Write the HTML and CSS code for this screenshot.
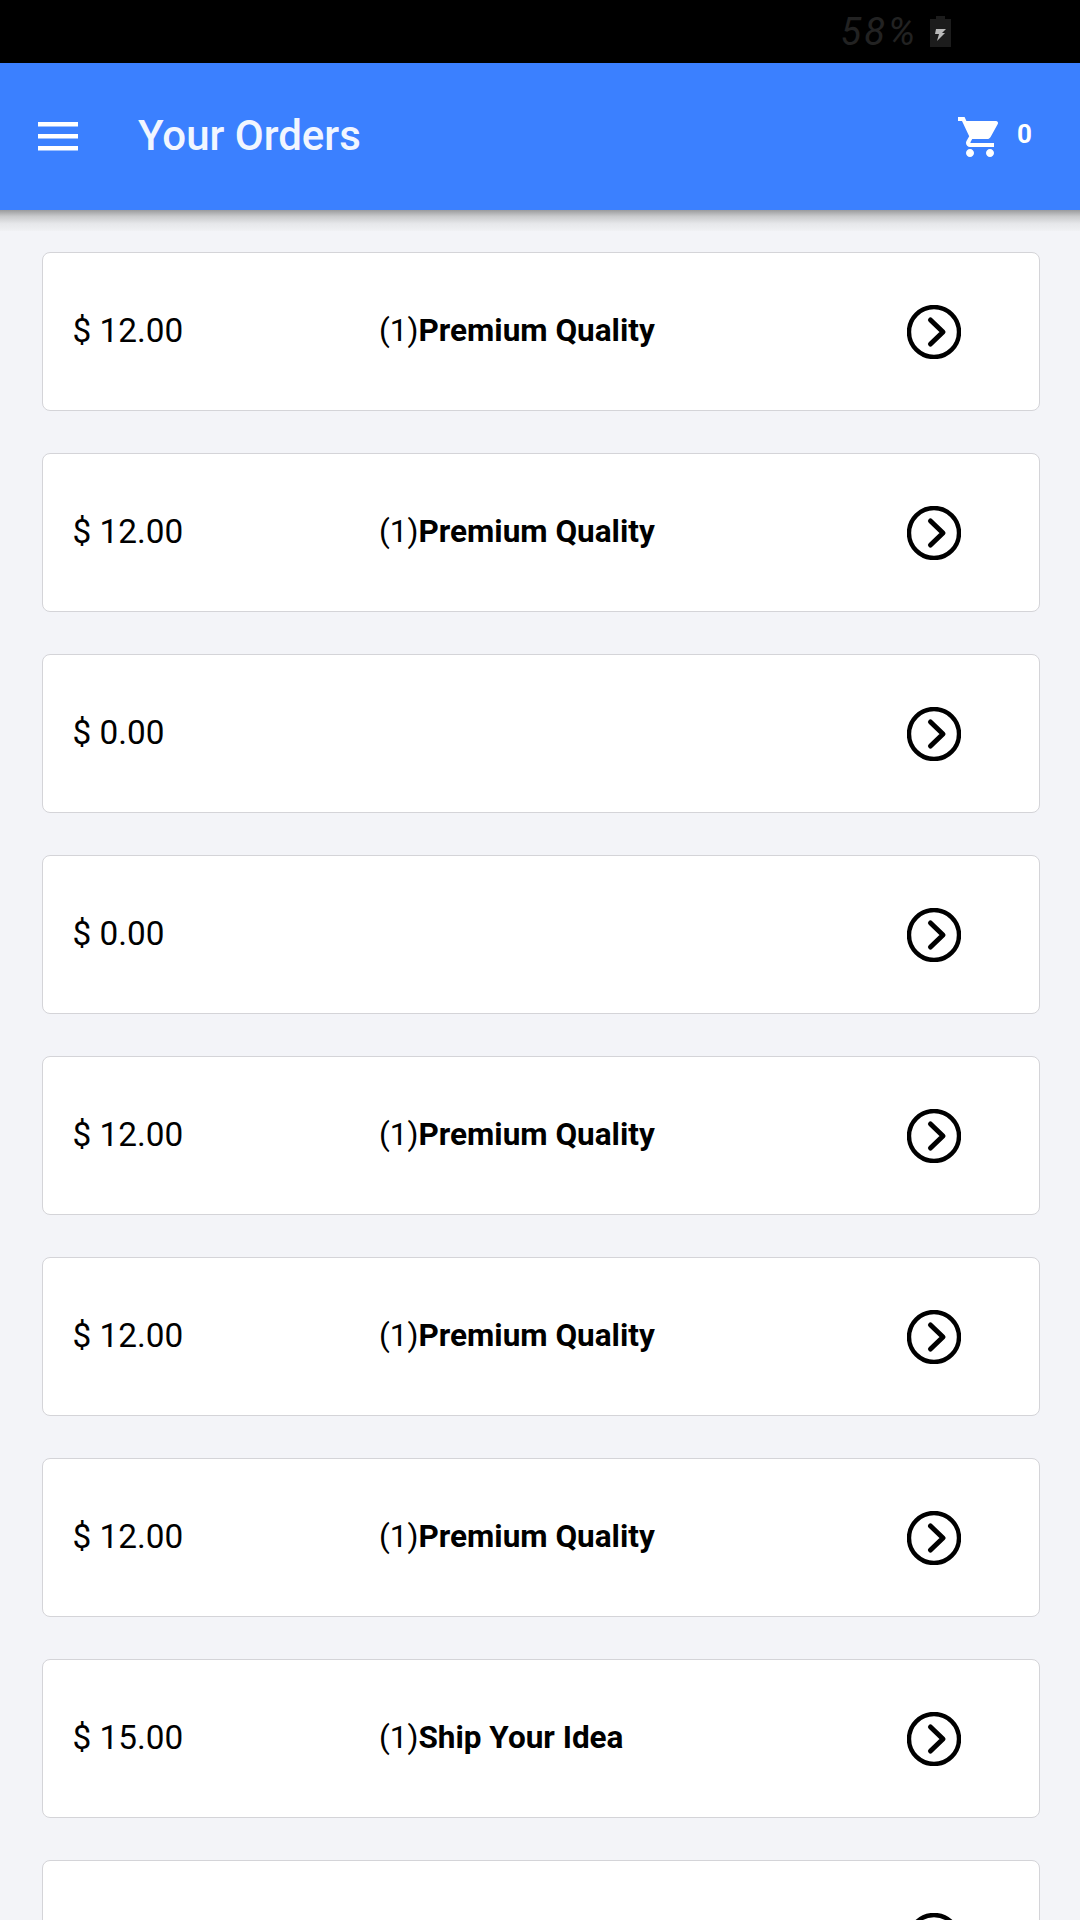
FILE: index.html
```html
<!DOCTYPE html>
<html lang="en">
<head>
<meta charset="utf-8">
<title>Your Orders</title>
<link rel="stylesheet" href="styles.css">
</head>
<body>
<div class="status">
  <span class="status-pct">58%</span>
  <svg class="status-batt" viewBox="0 0 21 31" width="21" height="31"><path fill="#1c1c1c" d="M6 0h9v3h6v28H0V3h6z"/><path fill="#b9b9b9" d="M6 13h10l-4 4h3l-8 8 2-7H5z"/></svg>
</div>
<header class="bar">
  <svg class="menu" viewBox="0 0 40 29" width="40" height="29"><path fill="#fff" d="M0 0h40v4.5H0zM0 12h40v4.500H0zM0 24h40v4.500H0z"/></svg>
  <h1 class="title">Your Orders</h1>
  <svg class="cart" viewBox="0 0 24 24" width="48" height="48"><path fill="#fff" d="M7 18c-1.100 0-1.990.9-1.990 2S5.900 22 7 22s2-.9 2-2-.9-2-2-2zM1 2v2h2l3.600 7.590-1.350 2.450c-.16.280-.25.610-.25.960 0 1.100.9 2 2 2h12v-2H7.420c-.14 0-.25-.11-.25-.25l.03-.12.9-1.630h7.450c.75 0 1.410-.41 1.750-1.030l3.580-6.490A1 1 0 0 0 20 4H5.210l-.94-2H1zm16 16c-1.100 0-1.990.9-1.990 2s.89 2 1.990 2 2-.9 2-2-.9-2-2-2z"/></svg>
  <span class="count">0</span>
</header>
<div class="bar-shadow"></div>
<main class="orders">
  <article class="order"><span class="price">$ 12.00</span><span class="item">(1)<b>Premium Quality</b></span><svg class="go" viewBox="0 0 54 54" width="54" height="54"><use href="#go"/></svg></article>
  <article class="order"><span class="price">$ 12.00</span><span class="item">(1)<b>Premium Quality</b></span><svg class="go" viewBox="0 0 54 54" width="54" height="54"><use href="#go"/></svg></article>
  <article class="order"><span class="price">$ 0.00</span><span class="item"></span><svg class="go" viewBox="0 0 54 54" width="54" height="54"><use href="#go"/></svg></article>
  <article class="order"><span class="price">$ 0.00</span><span class="item"></span><svg class="go" viewBox="0 0 54 54" width="54" height="54"><use href="#go"/></svg></article>
  <article class="order"><span class="price">$ 12.00</span><span class="item">(1)<b>Premium Quality</b></span><svg class="go" viewBox="0 0 54 54" width="54" height="54"><use href="#go"/></svg></article>
  <article class="order"><span class="price">$ 12.00</span><span class="item">(1)<b>Premium Quality</b></span><svg class="go" viewBox="0 0 54 54" width="54" height="54"><use href="#go"/></svg></article>
  <article class="order"><span class="price">$ 12.00</span><span class="item">(1)<b>Premium Quality</b></span><svg class="go" viewBox="0 0 54 54" width="54" height="54"><use href="#go"/></svg></article>
  <article class="order"><span class="price">$ 15.00</span><span class="item">(1)<b>Ship Your Idea</b></span><svg class="go" viewBox="0 0 54 54" width="54" height="54"><use href="#go"/></svg></article>
  <article class="order"><span class="price"></span><span class="item"></span><svg class="go" viewBox="0 0 54 54" width="54" height="54"><use href="#go"/></svg></article>
</main>
<svg class="defs" width="0" height="0"><defs><g id="go"><circle cx="27" cy="27" r="25" fill="none" stroke="#000" stroke-width="4.400"/><path d="M23.500 15l12.500 12-12.500 12" fill="none" stroke="#000" stroke-width="5" stroke-linecap="round" stroke-linejoin="round"/></g></defs></svg>
</body>
</html>
```
FILE: styles.css
```css
* { box-sizing: border-box; }
html, body { margin: 0; height: 1920px; overflow: hidden; }
body { background: #f3f4f8; font-family: Roboto, "Noto Sans", sans-serif; color: #000; }
.status { height: 63px; background: #000; display: flex; align-items: center; justify-content: flex-end; gap: 12px; padding-right: 129px; }
.status-pct { color: #222; font-size: 38px; font-style: italic; font-weight: 400; letter-spacing: 3px; line-height: 1; }
.status-batt { display: block; }
.bar { height: 147px; background: #3b80ff; display: flex; align-items: center; padding: 0 48px 0 38px; color: #fff; }
.menu { display: block; flex: none; }
.title { margin: -2px 0 0 60px; font-size: 42px; font-weight: 500; line-height: 1; flex: 1; color: #f1f6ff; }
.cart { display: block; flex: none; margin-right: 13px; }
.count { font-size: 26px; font-weight: 700; line-height: 1; margin-top: -6px; }
.bar-shadow { height: 21px; background: linear-gradient(#9a9b9d 0, #c9cacc 30%, #e6e7ea 65%, #f0f1f4 100%); }
.orders { padding: 21px 40px 0 42px; display: flex; flex-direction: column; gap: 42px; }
.order { height: 159.05px; flex: none; background: #fff; border: 1.5px solid #d4d4d8; border-radius: 8px; display: grid; grid-template-columns: 306.500px 1fr 54px; align-items: center; padding: 0 78px 0 29.500px; }
.price { font-size: 33.300px; margin-bottom: 3px; }
.item { font-size: 31.500px; margin-bottom: 2px; }
.item b { font-weight: 700; }
.go { display: block; }
.defs { position: absolute; }
```
